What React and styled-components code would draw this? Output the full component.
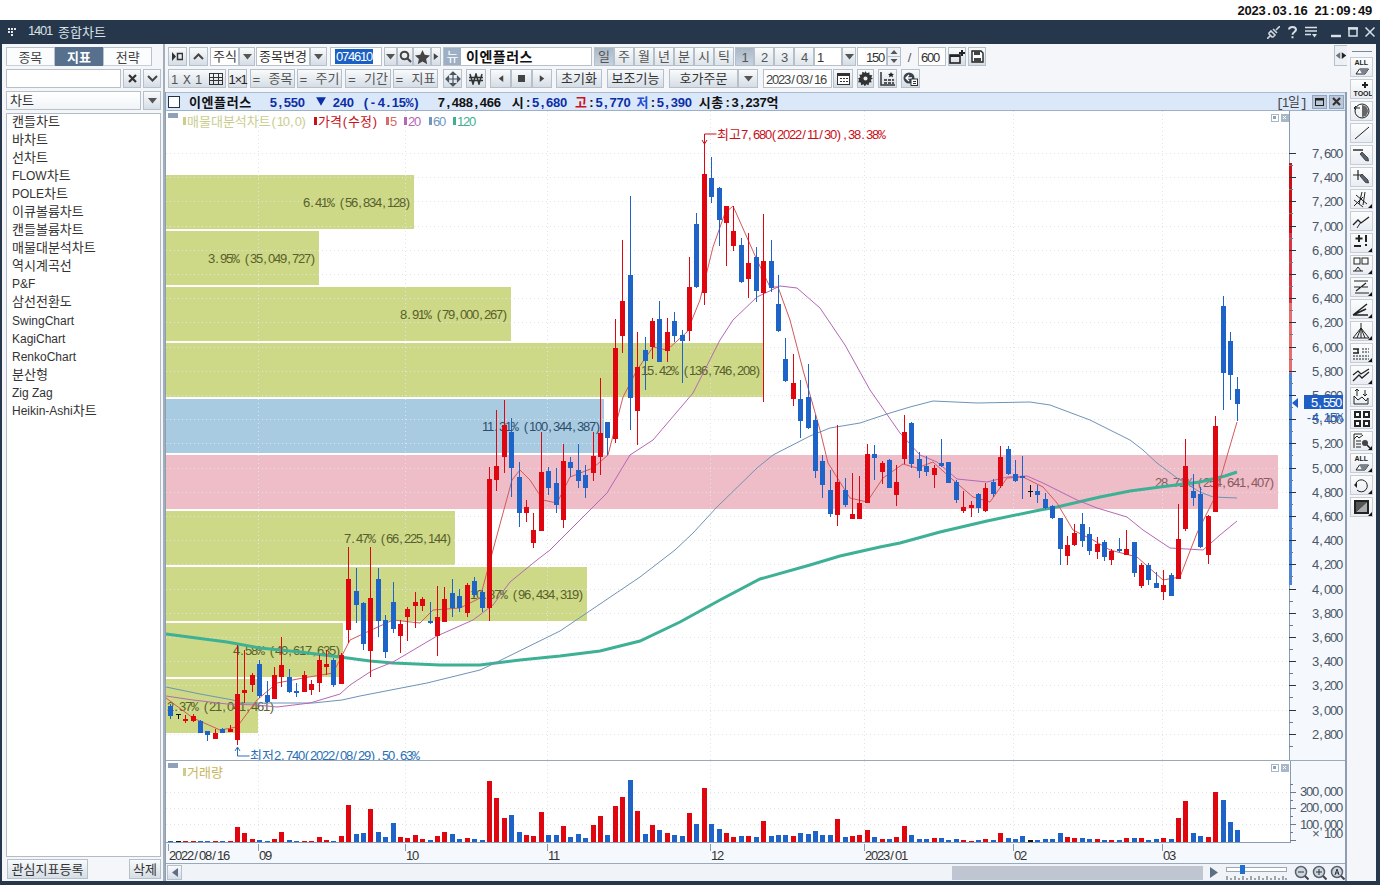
import React from 'react';
import styled, { createGlobalStyle, css } from 'styled-components';

const Global = createGlobalStyle`
  html, body { margin: 0; padding: 0; width: 1380px; height: 885px; overflow: hidden; background: #fff; }
  * { box-sizing: border-box; }
`;

/* ---------- text runs: the original bitmap font puts Latin in fixed half-width cells, Hangul in full-width ones ---------- */
const koCss = css`font-family: "Noto Sans CJK KR", sans-serif; font-size: 13px;`;
const cellCss = css`
  font-family: ${p => p.$mono ? '"Liberation Mono", monospace' : '"Liberation Sans", sans-serif'};
  font-size: 13px; letter-spacing: ${p => p.$ls}px; white-space: pre;
`;
const sansCss = css`font-family: "Liberation Sans", sans-serif; font-size: 12px;`;
const KoSpan = styled.span`${koCss}; position: relative; top: -1px;`;
const SansSpan = styled.span`${sansCss}; position: relative; top: -1px;`;
const CellSpan = styled.span`${cellCss}; margin-left: ${p => p.$dx || 0}px;`;
const CellGroup = styled.span`white-space: pre;`;
const KoT = styled.tspan`${koCss}`;
const CellT = styled.tspan`${cellCss}`;

const classes = [[/^[0-9]+$/, 7.23, false], [/^[,./: ]+$/, 3.61, true], [/^[()-]+$/, 4.33, true]];
const cellRuns = (text, cell) => (text.match(/[0-9]+|[,./: ]+|[()-]+|[^0-9,./: ()-]+/g) || []).map(r => {
  const hit = classes.find(([re]) => re.test(r));
  if (!hit) return { r, mono: true, ls: +(cell - 7.8).toFixed(2), dx: 0 };
  const extra = +(cell - hit[1]).toFixed(2);
  /* narrow punctuation sits in the middle of its cell */
  if (hit[2] && r.length === 1) return { r, mono: false, ls: extra / 2, dx: extra / 2 };
  return { r, mono: false, ls: extra, dx: 0 };
});
const Cells = ({ children, cell = 6 }) => (
  <CellGroup>
    {cellRuns(children, cell).map(({ r, mono, ls, dx }, i) => <CellSpan key={i} $mono={mono} $ls={ls} $dx={dx}>{r}</CellSpan>)}
  </CellGroup>
);
const CellsT = ({ children, cell = 6 }) => cellRuns(children, cell).map(({ r, mono, ls, dx }, i) =>
  <CellT key={i} $mono={mono} $ls={ls} dx={dx}>{r}</CellT>);

const hangulRuns = (s) => s.split(/([가-힣]+)/).filter(Boolean);
const isKo = (r) => /[가-힣]/.test(r);
const MixSans = ({ children }) => hangulRuns(children).map((r, i) =>
  isKo(r) ? <KoSpan key={i}>{r}</KoSpan> : <SansSpan key={i}>{r}</SansSpan>);
const MixT = ({ children }) => hangulRuns(children).map((r, i) =>
  isKo(r) ? <KoT key={i}>{r}</KoT> : <CellsT key={i}>{r}</CellsT>);

/* ---------- page frame ---------- */
const Page = styled.div`width: 1380px; height: 885px; display: flex; flex-direction: column; background: #fff;`;
const Clock = styled.div`
  height: 20px; display: flex; align-items: center; justify-content: flex-end; padding-right: 8px;
  font-weight: 700; color: #111;
`;
const Window = styled.div`flex: 1; display: flex; flex-direction: column; background: #27374b; min-height: 0;`;
const TitleBar = styled.div`height: 24px; display: flex; align-items: center; padding: 0 5px 0 8px; color: #d8e0e8;`;
const TitleText = styled.div`margin-left: 9px; font-size: 12px; white-space: nowrap; display: flex; gap: 6px;`;
const TitleTools = styled.div`margin-left: auto; display: flex; align-items: center;`;
const Body = styled.div`flex: 1; min-height: 0; display: flex; margin: 0 4px 4px 2px; background: #f4f6f9;`;

/* ---------- left sidebar ---------- */
const Sidebar = styled.div`width: 161px; display: flex; flex-direction: column; padding: 3px 2px 2px 4px;`;
const Splitter = styled.div`width: 2px; background: #a3aebb;`;
const Tabs = styled.div`display: flex; height: 19px; margin-right: 9px;`;
const Tab = styled.div`
  flex: 1; display: flex; align-items: center; justify-content: center; padding-top: 2px;
  background: ${p => p.$on ? '#56708e' : '#fbfcfd'};
  color: ${p => p.$on ? '#fff' : '#444'};
  font-weight: ${p => p.$on ? 700 : 400};
  border: 1px solid ${p => p.$on ? '#56708e' : '#b9c1ca'};
  border-bottom-color: ${p => p.$on ? '#56708e' : '#c9d0d7'};
`;
const SideRow = styled.div`display: flex; height: 19px; margin-top: 3px; gap: ${p => p.$gap || 2}px;`;
const Field = styled.div`
  flex: 1; min-width: 0; background: ${p => p.$grad ? 'linear-gradient(#fff,#f1f4f7)' : '#fff'};
  border: 1px solid #b8c0c9; display: flex; align-items: center; padding-left: 3px; color: #333;
`;
const Btn = styled.div`
  flex: none; width: ${p => p.$w}px; height: ${p => p.$h || 19}px; margin-left: ${p => p.$ml || 0}px;
  display: flex; align-items: center; justify-content: center; gap: ${p => p.$gap || 0}px;
  background: linear-gradient(#f9fbfc, #d5dde5); border: 1px solid #b6c0ca;
  color: ${p => p.$c || '#555'}; white-space: nowrap;
`;
const ActiveSeg = styled(Btn)`background: ${p => p.$on ? 'linear-gradient(#aab7c6,#c8d3de)' : 'linear-gradient(#f9fbfc,#dde4ea)'};`;
const DashLabel = styled.span`white-space: pre;`;
const List = styled.div`flex: 1; margin-top: 3px; background: #fff; border: 1px solid #b3bcc6; padding: 0 0 0 5px;`;
const ListItem = styled.div`height: 18.05px; line-height: 16px; color: #333; white-space: nowrap;`;
const SideFoot = styled.div`display: flex; justify-content: space-between; height: 20px; margin-top: 2px; padding-left: 1px;`;

/* ---------- main column ---------- */
const Main = styled.div`flex: 1; min-width: 0; display: flex; flex-direction: column;`;
const ToolRow = styled.div`display: flex; height: 19px; margin-top: 3px; padding-left: 3px; position: relative;`;
const Box = styled.div`
  flex: none; width: ${p => p.$w}px; height: 19px; margin-left: ${p => p.$ml || 0}px;
  background: #fff; border: 1px solid #b8c0c9; display: flex; align-items: center;
  justify-content: ${p => p.$end ? 'flex-end' : 'flex-start'}; padding: 0 2px; color: ${p => p.$c || '#333'}; white-space: nowrap;
`;
const Selected = styled.span`background: #1a60c4; color: #fff; padding: 0 1px; margin-left: 2px; line-height: 14px;`;
const News = styled.div`
  width: 17px; height: 17px; background: #9cafc4; color: #fff; display: flex; align-items: center; justify-content: center; margin-left: -2px;
`;
const StockName = styled.span`
  ${koCss}; font-size: 14px; font-weight: 700; color: #111; margin-left: 5px; letter-spacing: .5px; position: relative; top: -1px;
`;
const Slash = styled.div`flex: none; width: 17px; text-align: center; color: #555; line-height: 19px;`;
const Collapse = styled.div`
  position: absolute; right: 0; top: -2px; width: 13px; height: 21px; background: #edf1f5;
  border: 1px solid #b6c0ca; border-right: 0; display: flex; align-items: center; justify-content: center;
`;
const ChartWrap = styled.div`
  flex: 1; margin-top: 4px; min-height: 0; display: flex; flex-direction: column;
  border-left: 1px solid #8d9db2; border-right: 2px solid #8d9db2;
`;
const Header = styled.div`
  flex: none; height: 19px; background: #dbe8fa; border-top: 1px solid #a9bbd1; border-bottom: 1px solid #9db0c8;
  display: flex; align-items: center; padding-left: 2px; position: relative; white-space: nowrap;
  font-weight: 700; color: #111;
`;
const Check = styled.div`width: 12px; height: 12px; border: 1px solid #24324a; background: #fff;`;
const HeadName = styled.span`${koCss}; font-weight: 700; letter-spacing: .6px; margin-left: ${p => p.$ml}px; color: ${p => p.$c || '#111'};`;
const HeadNum = styled.span`margin-left: ${p => p.$ml || 0}px; color: ${p => p.$c || '#111'};`;
const Period = styled.div`
  margin-left: auto; display: flex; align-items: center; gap: 2px; padding-right: 1px; font-weight: 400; color: #444;
`;
const PeriodText = styled.span`margin-right: 4px;`;
const PanelBtn = styled.div`
  width: 15px; height: 14px; background: #b9c7d8; border: 1px solid #93a4b8; display: flex; align-items: center; justify-content: center; color: #222;
`;
const PriceSvg = styled.svg`display: block; flex: none; width: 1179px; height: 649px; background: #fff; overflow: visible;`;
const VolSvg = styled.svg`display: block; flex: none; width: 1179px; height: 102px; background: #fff; border-top: 0;`;
const PanelLine = styled.div`flex: none; height: 1px; background: #9aa9bc; position: relative;`;
const ScrollBar = styled.div`flex: none; height: 17px; display: flex; align-items: center; background: #f0f3f7;`;
const Thumb = styled.div`width: 251px; height: 14px; margin-left: auto; background: #bfc6d2;`;

/* ---------- right drawing toolbar ---------- */
const RightBar = styled.div`width: 29px; flex: none; display: flex; flex-direction: column; align-items: flex-start; padding: 7px 0 0 3px; gap: 2px;`;
const RightRule = styled.div`width: 20px; height: 1px; background: #7f8a96; margin: 0 0 3px 2px;`;
const ToolCell = styled.div`
  position: relative; width: 23px; height: 20px; background: linear-gradient(#fcfdfd,#e9edf2); border: 1px solid #c7cdd4;
  ${p => p.$corner && css`&::after { content: ''; position: absolute; right: 0; bottom: 0; border: 2px solid transparent; border-right-color: #111; border-bottom-color: #111; }`}
`;
const ToolSvg = styled.svg`display: block; width: 21px; height: 18px;`;
const TinyLabel = styled.text`font: bold 7px "Liberation Sans", sans-serif; fill: #222;`;
const Ico = styled.svg`display: block; flex: none; margin-left: ${p => p.$ml || 0}px;`;

/* ---------- chart text ---------- */
const Lab = styled.text`fill: ${p => p.$c || '#4b5666'}; text-anchor: ${p => p.$a || 'start'};`;

/* candles: bodyTop, bodyBottom, wickTop, wickBottom, colour (r/b/k), volume height */
const C = [
[706,716,704,719,'b',1],[714,715,714,719,'k',1],[719,721,715,723,'r',1],[716,721,714,722,'r',1],[721,733,720,733,'b',1],[731,735,731,741,'b',1],[733,739,729,739,'r',1],[729,733,728,733,'b',1],[729,732,725,732,'r',1],[694,740,645,745,'r',15],
[690,693,650,703,'r',9],[675,685,673,692,'r',3],[664,696,660,698,'b',2],[695,702,681,703,'b',1],[675,699,667,699,'r',3],[665,677,637,687,'r',10],[677,692,669,693,'b',2],[691,693,683,697,'b',1],[675,692,671,692,'r',1],[684,690,680,695,'r',1],
[660,683,655,692,'r',5],[664,667,650,675,'r',2],[660,685,658,687,'b',1],[655,684,653,684,'r',6],[579,630,547,643,'r',37],[591,605,568,623,'b',8],[603,644,602,650,'b',9],[598,651,547,677,'r',33],[579,621,568,637,'b',10],[620,652,615,658,'b',5],
[602,629,582,633,'b',19],[624,636,620,653,'r',5],[609,617,607,641,'r',4],[602,606,592,628,'r',7],[599,606,597,611,'r',3],[621,623,602,624,'b',2],[617,636,586,656,'r',6],[599,622,587,622,'r',10],[593,608,579,617,'b',8],[596,608,589,612,'b',3],
[585,613,583,617,'r',4],[581,595,577,597,'b',3],[592,608,590,612,'b',2],[479,608,467,621,'r',61],[466,480,410,491,'r',44],[425,457,400,473,'r',24],[432,468,418,497,'b',27],[477,513,462,527,'b',10],[507,513,500,522,'r',7],[530,543,513,548,'r',6],
[472,531,432,531,'r',30],[471,488,467,495,'b',7],[483,505,468,513,'b',7],[461,520,444,528,'r',16],[462,468,457,477,'b',5],[470,481,444,488,'b',8],[475,488,465,498,'b',4],[456,473,432,481,'r',17],[433,457,378,475,'r',26],[422,438,422,455,'b',7],
[348,439,319,443,'r',36],[301,336,240,353,'r',45],[275,398,196,430,'b',62],[367,411,332,445,'r',31],[350,361,337,390,'b',8],[321,347,318,359,'r',17],[319,362,301,362,'b',12],[332,351,318,362,'r',9],[321,336,312,342,'b',7],[335,341,330,383,'b',6],
[287,331,257,341,'r',29],[224,287,213,288,'b',18],[174,293,144,305,'r',54],[178,197,157,203,'b',18],[188,220,187,246,'b',13],[206,223,206,266,'r',9],[231,246,206,251,'r',5],[245,282,238,283,'b',6],[263,279,233,298,'r',6],[257,291,247,302,'b',5],
[261,293,214,402,'r',21],[261,288,240,292,'b',6],[304,331,275,332,'b',7],[359,381,338,382,'b',7],[383,399,354,406,'r',6],[399,421,380,438,'b',9],[397,428,364,429,'b',8],[420,471,415,478,'b',11],[461,485,455,498,'b',7],[490,514,470,517,'b',7],
[482,515,425,526,'r',23],[490,505,478,507,'b',5],[514,519,473,519,'r',6],[503,519,476,519,'r',7],[454,503,444,503,'r',12],[454,458,445,480,'b',5],[463,472,461,484,'r',3],[460,488,459,488,'b',3],[482,495,465,506,'r',5],[432,459,415,464,'r',16],
[423,464,422,468,'b',7],[459,471,452,478,'b',3],[466,472,456,476,'b',3],[468,475,465,488,'r',4],[463,466,439,467,'b',4],[462,483,462,483,'b',2],[482,500,480,503,'b',3],[507,511,491,513,'r',2],[505,508,501,517,'r',1],[494,508,493,513,'b',2],
[488,511,483,512,'r',3],[482,494,479,497,'b',2],[457,486,446,488,'r',9],[449,474,446,475,'b',4],[474,481,460,482,'b',3],[476,478,456,499,'b',6],[491,492,485,497,'k',2],[491,495,485,503,'b',2],[499,508,493,509,'b',3],[506,518,505,519,'b',3],
[518,549,518,565,'b',9],[545,556,536,565,'r',5],[533,545,524,546,'r',4],[524,541,513,547,'b',4],[534,551,527,555,'b',3],[544,552,537,559,'r',3],[542,557,540,561,'b',2],[551,560,549,565,'r',2],[549,551,538,552,'b',2],[549,555,530,555,'r',4],
[542,573,542,577,'b',4],[565,586,563,588,'r',4],[565,580,563,585,'b',2],[583,588,572,588,'b',3],[585,592,570,600,'r',4],[575,596,573,596,'b',3],[539,579,504,579,'r',24],[466,529,439,531,'r',41],[491,498,474,506,'b',9],[494,547,487,548,'b',6],
[516,555,515,564,'r',5],[426,512,416,512,'r',50],[306,373,296,410,'b',42],[341,375,332,400,'b',20],[389,404,377,421,'b',12],
];
const colour = { r: '#e0060f', b: '#1e63c8', k: '#111' };
const cx = (i) => Math.round(170.3 + i * 7.41);

const pts = (a) => a.map(p => p.join(',')).join(' ');
const MA120 = [[166,634],[227,642],[260,648],[300,652],[340,657],[370,661],[393,663],[440,665],[480,665],[520,660],[560,656],[600,651],[640,641],[680,622],[720,600],[760,579],[810,565],[840,556],[880,547],[900,543],[940,532],[987,521],[1040,510],[1057,507],[1100,497],[1130,491],[1160,487],[1200,482],[1225,476],[1237,472]];
const MA60 = [[166,687],[200,694],[233,700],[240,703],[260,703],[313,703],[342,700],[360,696],[427,683],[480,670],[493,664],[560,631],[640,577],[675,550],[693,533],[717,507],[757,468],[773,455],[810,436],[830,428],[860,423],[890,413],[910,407],[933,401],[977,403],[1030,402],[1050,405],[1090,420],[1130,440],[1143,450],[1157,463],[1177,478],[1200,492],[1213,497],[1237,498]];
const MA20 = [[166,696],[193,700],[227,704],[257,705],[277,707],[310,703],[340,694],[350,685],[373,670],[393,662],[437,636],[473,620],[493,605],[510,582],[537,560],[550,550],[607,493],[630,455],[653,440],[693,393],[720,340],[733,320],[757,297],[780,286],[797,288],[820,308],[845,345],[870,390],[900,433],[920,455],[937,462],[957,479],[987,482],[1007,477],[1027,476],[1043,483],[1077,500],[1097,508],[1127,517],[1143,530],[1170,548],[1203,550],[1220,535],[1237,521]];
const MA5 = [[166,698],[193,718],[220,730],[237,727],[257,700],[277,683],[303,678],[333,673],[350,640],[367,632],[393,620],[420,623],[433,610],[460,608],[480,598],[493,550],[512,480],[520,470],[530,480],[543,500],[557,503],[570,477],[593,468],[608,455],[623,397],[637,370],[653,347],[667,350],[687,332],[700,300],[713,247],[725,213],[733,206],[757,260],[770,287],[778,287],[790,320],[803,370],[820,430],[828,463],[850,498],[867,502],[883,478],[903,464],[917,468],[933,462],[953,480],[973,497],[990,502],[1007,478],[1023,477],[1043,487],[1057,503],[1073,530],[1093,540],[1110,550],[1137,557],[1163,580],[1180,577],[1197,533],[1215,497],[1237,422]];

/* y, box right edge, fill, text colour, label, label right edge */
const Profile = [
 [175,414,'#cdd986','#59602c','6.41% (56,834,128)',411],[231,319,'#cdd986','#59602c','3.95% (35,049,727)',316],[287,511,'#cdd986','#59602c','8.91% (79,000,267)',508],
 [343,764,'#cdd986','#59602c','15.42% (136,746,208)',761],[399,604,'#a9cbe2','#2d4f6d','11.31% (100,344,387)',601],[455,1278,'#eebdc7','#8a5a62','28.71% (254,641,407)',1275],
 [511,455,'#cdd986','#59602c','7.47% (66,225,144)',452],[567,587,'#cdd986','#59602c','10.87% (96,434,319)',584],[623,343,'#cdd986','#59602c','4.58% (40,617,635)',341],[679,258,'#cdd986','#59602c','2.37% (21,041,461)',275],
];
const Months = [258, 405, 547, 710, 864, 1013, 1162];
const Prices = [7600,7400,7200,7000,6800,6600,6400,6200,6000,5800,5600,5400,5200,5000,4800,4600,4400,4200,4000,3800,3600,3400,3200,3000,2800];
const py = (i) => 153 + i * 24.2;
const fmt = (n) => n.toLocaleString('en-US');
const Legend = [
 [183,'#c9cd8e','매물대분석차트(10,0)'],[314,'#c8101a','가격(수정)'],[386,'#d86a6a','5'],[404,'#b566b8','20'],[429,'#6f97bd','60'],[453,'#3eaf91','120'],
];

const MiniBoxes = ({ y }) => (
  <g shapeRendering="crispEdges">
    <rect x="1271" y={y} width="7" height="7" fill="#fff" stroke="#a9b8c8" />
    <rect x="1273" y={y + 2} width="3" height="3" fill="#8fa1b5" />
    <rect x="1281" y={y} width="7" height="7" fill="#a9b8c8" stroke="#a9b8c8" />
    <path d={`M1283 ${y + 2}l3 3m0-3l-3 3`} stroke="#fff" fill="none" />
    <rect x="168" y={y - 1} width="10" height="5" fill="#8ea0ba" />
  </g>
);

const PriceChart = () => (
  <PriceSvg viewBox="166 111 1179 649">
    <rect x="1290" y="111" width="55" height="649" fill="#f5f8fc" />
    <g shapeRendering="crispEdges">
      {Profile.map(([y, x2, f]) => <rect key={y} x="166" y={y} width={x2 - 166} height="54" fill={f} />)}
      {Prices.map((_, i) => <line key={i} x1="166" x2="1289" y1={Math.round(py(i))} y2={Math.round(py(i))} stroke="#dfe4ea" strokeDasharray="1 3" />)}
      {Months.map(x => <line key={x} x1={x} x2={x} y1="111" y2="760" stroke="#dfe4ea" strokeDasharray="1 3" />)}
    </g>
    {Profile.map(([y, , , c, t, tx]) => <Lab key={y} x={tx} y={y + 32} $c={c} $a="end"><MixT>{t}</MixT></Lab>)}
    <polyline points={pts(MA120)} fill="none" stroke="#3eb096" strokeWidth="3" />
    <polyline points={pts(MA60)} fill="none" stroke="#6f93b8" strokeWidth="1" />
    <polyline points={pts(MA20)} fill="none" stroke="#b468b4" strokeWidth="1" />
    <polyline points={pts(MA5)} fill="none" stroke="#d2595c" strokeWidth="1" />
    <g shapeRendering="crispEdges">
      {C.map((d, i) => (
        <g key={i} fill={colour[d[4]]}>
          <rect x={cx(i)} y={d[2]} width="1" height={d[3] - d[2]} />
          <rect x={cx(i) - 2} y={d[0]} width="5" height={Math.max(1, d[1] - d[0])} />
        </g>
      ))}
      <rect x="1289" y="163" width="3" height="70" fill="#cb0f12" />
      <rect x="1289" y="233" width="3" height="70" fill="#dc3140" />
      <rect x="1289" y="303" width="3" height="70" fill="#ea6b6c" />
      <rect x="1289" y="373" width="3" height="212" fill="#4a84d8" />
      <line x1="1289.5" x2="1289.5" y1="111" y2="163" stroke="#8b9bb0" />
      <line x1="1289.5" x2="1289.5" y1="585" y2="760" stroke="#8b9bb0" />
      {Prices.map((_, i) => <line key={i} x1="1289" x2="1296" y1={Math.round(py(i))} y2={Math.round(py(i))} stroke="#2a3340" />)}
      {Prices.map((_, i) => <line key={i} x1="1289" x2="1293" y1={Math.round(py(i) + 12)} y2={Math.round(py(i) + 12)} stroke="#6e7b8b" />)}
    </g>
    {Prices.map((p, i) => <Lab key={p} x="1342" y={py(i) + 5} $a="end"><CellsT>{fmt(p)}</CellsT></Lab>)}
    <path d="M1292 403l6-5v10z" fill="#1f5fc4" />
    <rect x="1304" y="395" width="39" height="14" fill="#1f5fc4" />
    <Lab x="1341" y="407" $c="#fff" $a="end"><CellsT>5,550</CellsT></Lab>
    <Lab x="1341" y="422" $c="#1f5fc4" $a="end"><CellsT>-4.15%</CellsT></Lab>

    {Legend.map(([x, c, t]) => (
      <g key={x}>
        <rect x={x} y="117" width="3" height="8" fill={c} shapeRendering="crispEdges" />
        <Lab x={x + 4} y="126" $c={c}><MixT>{t}</MixT></Lab>
      </g>
    ))}
    <MiniBoxes y={114} />
    <path d="M704.5 145v-11h12M702 140l2.5 4l2.500-4" fill="none" stroke="#c8101a" />
    <Lab x="717" y="139" $c="#c8101a"><MixT>최고7,680(2022/11/30),38.38%</MixT></Lab>
    <path d="M237.500 748v8h12M235 751l2.500-4l2.500 4" fill="none" stroke="#2a6fb5" />
    <Lab x="250" y="760" $c="#2a6fb5"><MixT>최저2,740(2022/08/29),50.63%</MixT></Lab>
  </PriceSvg>
);

const Dates = [[169,'2022/08/16',168],[259,'09',258],[406,'10',405],[548,'11',547],[711,'12',710],[865,'2023/01',864],[1014,'02',1013],[1163,'03',1162]];
const VolChart = () => (
  <VolSvg viewBox="166 761 1179 102">
    <rect x="1290" y="761" width="55" height="82" fill="#f5f8fc" />
    <rect x="166" y="843" width="1179" height="20" fill="#f5f8fc" />
    <g shapeRendering="crispEdges">
      {[792, 808, 824].map(y => <line key={y} x1="166" x2="1289" y1={y} y2={y} stroke="#dfe4ea" strokeDasharray="1 3" />)}
      {Months.map(x => <line key={x} x1={x} x2={x} y1="761" y2="842" stroke="#dfe4ea" strokeDasharray="1 3" />)}
      {C.map((d, i) => <rect key={i} x={cx(i) - 2} y={842 - d[5]} width="5" height={d[5]} fill={colour[d[4]]} />)}
      <line x1="166" x2="1290" y1="842.5" y2="842.5" stroke="#8b9bb0" />
      <line x1="1290" x2="1290" y1="761" y2="843" stroke="#8b9bb0" />
      {[784,792,800,808,816,824,832,840].map((y, i) => <line key={y} x1="1290" x2={i % 2 ? 1296 : 1293} y1={y} y2={y} stroke="#6e7b8b" />)}
      {Dates.map(([, , t]) => <line key={t} x1={t} x2={t} y1="844" y2="851" stroke="#8b9bb0" />)}
    </g>
    <Lab x="1342" y="796" $a="end"><CellsT>300,000</CellsT></Lab>
    <Lab x="1342" y="812" $a="end"><CellsT>200,000</CellsT></Lab>
    <Lab x="1342" y="829" $a="end"><CellsT>100,000</CellsT></Lab>
    <Lab x="1342" y="838" $a="end"><CellsT>× 100</CellsT></Lab>
    <rect x="183" y="768" width="3" height="8" fill="#c9cd8e" shapeRendering="crispEdges" />
    <Lab x="187" y="777" $c="#c9b45a"><MixT>거래량</MixT></Lab>
    <MiniBoxes y={764} />
    {Dates.map(([x, t]) => <Lab key={t} x={x} y="860" $c="#333"><CellsT>{t}</CellsT></Lab>)}
  </VolSvg>
);

/* ---------- small icons ---------- */
const Caret = ({ c = '#555' }) => <Ico width="9" height="6" viewBox="0 0 9 6"><path d="M0 0h9L4.500 5.500z" fill={c} /></Ico>;
const Search = () => <Ico width="13" height="13" viewBox="0 0 13 13"><circle cx="5.500" cy="5.500" r="3.800" fill="none" stroke="#444" strokeWidth="2" /><path d="M8 8l4 4" stroke="#444" strokeWidth="2.200" /></Ico>;
const Star = () => <Ico width="15" height="14" viewBox="0 0 15 14"><path d="M7.500 0l2.200 4.800 5.300.6-3.900 3.600 1.100 5.200-4.700-2.700-4.700 2.700 1.100-5.200L0 5.400l5.300-.6z" fill="#444" /></Ico>;
const Tri = ({ dir = 'r', c = '#444', s = 8 }) => (
  <Ico width={s} height={s + 1} viewBox="0 0 8 9">
    <path d={dir === 'r' ? 'M1 0l6 4.500L1 9z' : dir === 'l' ? 'M7 0L1 4.500 7 9z' : dir === 'u' ? 'M0 7l4-6 4 6z' : 'M0 1h8L4 8z'} fill={c} />
  </Ico>
);
const Grid3 = () => <Ico width="14" height="12" viewBox="0 0 14 12"><path d="M.5.5h13v11H.5zM.5 4.200h13M.5 7.800h13M4.800.500v11M9.200.500v11" fill="none" stroke="#333" shapeRendering="crispEdges" /></Ico>;
const Move = () => <Ico width="16" height="16" viewBox="0 0 16 16"><path d="M8 1v14M1 8h14M8 1L5.500 3.500h5zM8 15l-2.500-2.500h5zM1 8l2.500-2.500v5zM15 8l-2.500-2.500v5z" fill="#4a5560" stroke="#4a5560" strokeWidth="1.200" /></Ico>;
const Won = () => <Ico width="14" height="12" viewBox="0 0 14 12"><path d="M1 1l3 10 3-10 3 10 3-10M0 4.500h14M0 7.500h14" fill="none" stroke="#333" strokeWidth="1.500" /></Ico>;
const Calendar = () => <Ico width="13" height="13" viewBox="0 0 13 13"><rect x=".5" y="1.500" width="12" height="11" fill="#fff" stroke="#333" /><rect x="0" y="1" width="13" height="3" fill="#333" /><path d="M3 6.500h2M6 6.500h2M9 6.500h2M3 9.500h2M6 9.500h2M9 9.500h2" stroke="#333" /></Ico>;
const Gear = () => <Ico width="15" height="15" viewBox="0 0 15 15"><path d="M7.500 0l1.300 2.300 2.500-1 .3 2.700 2.700.3-1 2.500L15 7.500l-2.300 1.300 1 2.500-2.700.3-.3 2.700-2.500-1-1.300 2.300-1.300-2.300-2.500 1-.3-2.700-2.700-.3 1-2.500L0 7.500l2.300-1.300-1-2.500 2.700-.3.300-2.700 2.500 1z" fill="#333" /><circle cx="7.500" cy="7.500" r="2" fill="#e6ebf0" /></Ico>;
const DotGrid = () => <Ico width="16" height="15" viewBox="0 0 16 15"><path d="M1 1v13h14" fill="none" stroke="#333" strokeWidth="1.500" /><path d="M4 8h3v2H4zM8 8h3v2H8zM12 8h2v2h-2zM4 11h3v2H4zM8 11h3v2H8zM12 11h2v2h-2z" fill="#555" /><path d="M11 1l.9 1.800L14 3l-1.400 1.300.3 2-1.900-1-1.900 1 .3-2L8 3l2.100-.2z" fill="#222" /></Ico>;
const Export = () => <Ico width="15" height="14" viewBox="0 0 15 14"><circle cx="6" cy="6" r="5.500" fill="#3a4350" /><path d="M3 6h6M6 3L3 6l3 3" fill="none" stroke="#fff" strokeWidth="1.300" /><rect x="8" y="7" width="6.500" height="6.500" fill="#fff" stroke="#333" /><path d="M10 9.500h3M10 11.500h3" stroke="#333" /></Ico>;
const NewWin = () => <Ico width="16" height="14" viewBox="0 0 16 14"><rect x="1" y="5" width="10" height="8" fill="none" stroke="#222" strokeWidth="1.600" /><path d="M1 6h10" stroke="#222" strokeWidth="2" /><path d="M13 0v6M10 3h6" stroke="#222" strokeWidth="2" /></Ico>;
const Save = () => <Ico width="13" height="13" viewBox="0 0 13 13"><path d="M1 1h9l2 2v9H1z" fill="#fff" stroke="#222" strokeWidth="1.400" /><rect x="3" y="1" width="6" height="4" fill="#444" /><rect x="3" y="8" width="7" height="4" fill="#444" /></Ico>;
const Spin = () => (
  <Ico width="14" height="19" viewBox="0 0 14 19">
    <rect x=".5" y=".5" width="13" height="18" fill="#eef1f5" stroke="#b6c0ca" /><path d="M0 9.500h14" stroke="#b6c0ca" />
    <path d="M3.500 7l3.500-4 3.500 4zM3.500 12l3.500 4 3.500-4z" fill="#555" />
  </Ico>
);
const XMark = () => <Ico width="9" height="9" viewBox="0 0 9 9"><path d="M1 1l7 7M8 1L1 8" stroke="#333" strokeWidth="2.200" /></Ico>;
const ChevD = () => <Ico width="11" height="7" viewBox="0 0 11 7"><path d="M1 1l4.500 4.500L10 1" fill="none" stroke="#444" strokeWidth="2" /></Ico>;
const ChevU = () => <Ico width="11" height="7" viewBox="0 0 11 7"><path d="M1 6l4.500-4.500L10 6" fill="none" stroke="#444" strokeWidth="2" /></Ico>;
const Dash = ({ children }) => <DashLabel><Cells>{'= '}</Cells> <KoSpan>{children}</KoSpan></DashLabel>;

const TitleIcons = () => (
  <TitleTools>
    <Ico width="13" height="13" viewBox="0 0 13 13"><path d="M13 0L9 4M0 13l3-3M4 5l4 4-2 2-1 0-3-3 0-1zM6 3l4 4" fill="none" stroke="#cfd8e2" strokeWidth="1.600" /></Ico>
    <Ico $ml={8} width="9" height="13" viewBox="0 0 9 13"><path d="M1 3.500C1 1.500 2.800 1 4.500 1S8 2 8 3.800c0 2-3.500 2.500-3.500 5M4.500 10.200v2" fill="none" stroke="#d8e0e8" strokeWidth="2" /></Ico>
    <Ico $ml={8} width="12" height="12" viewBox="0 0 12 12"><path d="M0 1.500h12M0 5h12M0 8.500h6" stroke="#d8e0e8" strokeWidth="1.500" /><path d="M7 8h5l-2.500 3.500z" fill="#d8e0e8" /></Ico>
    <Ico $ml={14} width="10" height="12" viewBox="0 0 10 12"><path d="M0 10h10" stroke="#d8e0e8" strokeWidth="2.400" /></Ico>
    <Ico $ml={7} width="10" height="10" viewBox="0 0 10 10"><rect x="1" y="1" width="8" height="8" fill="none" stroke="#d8e0e8" strokeWidth="1.500" /><path d="M0 1.500h10" stroke="#d8e0e8" strokeWidth="2.400" /></Ico>
    <Ico $ml={7} width="10" height="10" viewBox="0 0 10 10"><path d="M.5.5l9 9M9.500.5l-9 9" stroke="#d8e0e8" strokeWidth="1.500" /></Ico>
  </TitleTools>
);

const eraser = <><path d="M5 16l3.500-5h9L14 16z" fill="#fff" stroke="#222" /><path d="M8.500 11h9L14 16h-3z" fill="#7a838d" /></>;
const pencil = <path d="M9 8l2-2 6 6 .5 3-3-.5z" fill="#5b6570" stroke="#222" strokeWidth=".7" />;
const s = { fill: 'none', stroke: '#222', strokeWidth: 1 };
const DrawIcons = [
  [0, <>{<TinyLabel x="3.500" y="7">ALL</TinyLabel>}{eraser}</>],
  [0, <><path d="M14 2v6M11 5h6" stroke="#222" strokeWidth="2" /><TinyLabel x="2.500" y="15.500">TOOL</TinyLabel></>],
  [0, <><circle cx="11" cy="9" r="7" {...s} /><path d="M11 3a6 6 0 0 1 0 12z" fill="#666" /><path d="M3 6h6M5 4l-2 2 2 2" {...s} /></>],
  [0, <path d="M4 15L18 3" {...s} />],
  [0, <><path d="M2 4h10" stroke="#222" strokeWidth="1.400" />{pencil}</>],
  [0, <><path d="M7 2v10M2 7h10" stroke="#222" strokeWidth="1.200" />{pencil}</>],
  [1, <path d="M3 16L12 7M3 10l9 7M8 14l3-12M5 5l11 9M14 2l-2 13" {...s} />],
  [0, <><path d="M2 13l5-5 3 3 8-6" stroke="#222" strokeWidth="1.300" fill="none" /><path d="M6 16l4-6" {...s} /></>],
  [1, <><path d="M8 1v7M4.500 4.500h7M3 12h7" stroke="#222" strokeWidth="2" /><path d="M15 1v7M15 10v2" stroke="#222" strokeWidth="2" /></>],
  [1, <><rect x="3" y="2" width="6" height="6" {...s} /><rect x="11" y="2" width="6" height="6" {...s} /><path d="M2 15h10M4 15l3-4 3 4" {...s} /></>],
  [1, <path d="M3 3h14M15 5L5 13M4 15h14M3 9h6M11 9h6" stroke="#222" strokeWidth="1.200" fill="none" />],
  [1, <path d="M2 15h15M2 15L16 4M2 15l13-6" stroke="#222" strokeWidth="1.500" fill="none" />],
  [1, <path d="M10 1v15M10 6L2 16M10 6l8 10M10 6L6 16M10 6l4 10M2 16h16" {...s} />],
  [1, <><path d="M2 5h6M2 9h6M7 5v4" stroke="#222" strokeWidth="1.500" /><path d="M11 5h7M11 8h7M2 12h16M2 15h16" stroke="#222" strokeDasharray="2 1" /></>],
  [1, <><path d="M2 9l5-4 3 3 8-5M2 15l6-6 3 3 7-6" stroke="#222" strokeWidth="1.300" fill="none" /></>],
  [0, <><path d="M3 16V8l4 4 4-3 4 4 2-3v6z" {...s} /><path d="M6 1v7M4 3l2-2 2 2M14 8V2M12 6l2 2 2-2" {...s} /></>],
  [0, <><rect x="3" y="1" width="7" height="7" fill="#222" /><rect x="12" y="1" width="7" height="7" fill="#222" /><rect x="3" y="10" width="7" height="7" fill="#222" /><rect x="12" y="10" width="7" height="7" fill="#222" /><path d="M5 3h3v3H5zM14 3h3v3h-3zM5 12h3v3H5zM14 12h3v3h-3z" fill="#fff" /></>],
  [1, <><path d="M3 16V2h8M3 7l3-3 2 2 4-3M5 9h5M5 12h5M5 15h5" {...s} /><circle cx="14" cy="11" r="3" fill="#444" /><path d="M16 13l3 3" stroke="#222" strokeWidth="1.500" /></>],
  [1, <><TinyLabel x="3.500" y="7">ALL</TinyLabel>{eraser}</>],
  [1, <><path d="M5 7a6 6 0 1 1 1 7" {...s} /><path d="M3 9l3-3v6z" fill="#222" /></>],
  [1, <><rect x="3" y="2" width="15" height="14" fill="#222" /><path d="M5 14L16 4v10z" fill="#aaa" /><path d="M5 14V4h11z" fill="#555" /></>],
];

export default function App() {
  const listNames = ['캔들차트','바차트','선차트','FLOW차트','POLE차트','이큐볼륨차트','캔들볼륨차트','매물대분석차트','역시계곡선','P&F','삼선전환도','SwingChart','KagiChart','RenkoChart','분산형','Zig Zag','Heikin-Ashi차트'];
  return (
    <Page>
      <Global />
      <Clock><Cells cell={7}>2023.03.16 21:09:49</Cells></Clock>
      <Window>
        <TitleBar>
          <Ico width="11" height="9" viewBox="0 0 11 9"><path d="M0 0h2v2H0zM3 0h2v2H3zM6 0h2v2H6zM0 3h2v2H0zM3 3h2v2H3zM3 6h2v2H3z" fill="#e4e9ee" /></Ico>
          <TitleText><Cells>1401</Cells><KoSpan>종합차트</KoSpan></TitleText>
          <TitleIcons />
        </TitleBar>
        <Body>
          <Sidebar>
            <Tabs>
              <Tab><KoSpan>종목</KoSpan></Tab>
              <Tab $on><KoSpan>지표</KoSpan></Tab>
              <Tab><KoSpan>전략</KoSpan></Tab>
            </Tabs>
            <SideRow>
              <Field />
              <Btn $w={18}><XMark /></Btn>
              <Btn $w={18}><ChevD /></Btn>
            </SideRow>
            <SideRow $gap={0}>
              <Field $grad><KoSpan>차트</KoSpan></Field>
              <Btn $w={18}><Caret /></Btn>
            </SideRow>
            <List>
              {listNames.map(n => <ListItem key={n}><MixSans>{n}</MixSans></ListItem>)}
            </List>
            <SideFoot>
              <Btn $w={81} $h={20} $c="#333"><KoSpan>관심지표등록</KoSpan></Btn>
              <Btn $w={32} $h={20} $c="#333"><KoSpan>삭제</KoSpan></Btn>
            </SideFoot>
          </Sidebar>
          <Splitter />
          <Main>
            <ToolRow>
              <Btn $w={19}><Ico width="11" height="9" viewBox="0 0 11 9"><path d="M0 0l4 4.500L0 9z" fill="#333" /><rect x="5.500" y="1.500" width="5" height="6" fill="none" stroke="#333" strokeWidth="1.500" /></Ico></Btn>
              <Btn $w={19} $ml={2}><ChevU /></Btn>
              <Box $w={29} $ml={2}><KoSpan>주식</KoSpan></Box>
              <Btn $w={16}><Caret /></Btn>
              <Box $w={54} $ml={1}><KoSpan>종목변경</KoSpan></Box>
              <Btn $w={17}><Caret /></Btn>
              <Box $w={52} $ml={3}><Selected><Cells>074610</Cells></Selected></Box>
              <Btn $w={13} $ml={2}><Caret /></Btn>
              <Btn $w={16}><Search /></Btn>
              <Btn $w={18}><Star /></Btn>
              <Btn $w={10}><Tri s={6} /></Btn>
              <Box $w={149} $ml={2}><News><KoSpan>뉴</KoSpan></News><StockName>이엔플러스</StockName></Box>
              <ActiveSeg $w={20} $ml={2} $on><KoSpan>일</KoSpan></ActiveSeg>
              {['주','월','년','분','시','틱'].map(t => <ActiveSeg key={t} $w={20}><KoSpan>{t}</KoSpan></ActiveSeg>)}
              <ActiveSeg $w={19} $ml={1} $on><Cells>1</Cells></ActiveSeg>
              {['2','3','4'].map(t => <ActiveSeg key={t} $w={20}><Cells>{t}</Cells></ActiveSeg>)}
              <Box $w={28}><Cells>1</Cells></Box>
              <Btn $w={14}><Caret /></Btn>
              <Box $w={30} $ml={1} $end><Cells>150</Cells></Box>
              <Spin />
              <Slash><Cells>/</Cells></Slash>
              <Box $w={28}><Cells>600</Cells></Box>
              <Btn $w={18} $ml={2}><NewWin /></Btn>
              <Btn $w={18} $ml={2}><Save /></Btn>
              <Collapse><Tri dir="l" s={6} c="#6a7684" /><Tri s={6} c="#222" /></Collapse>
            </ToolRow>
            <ToolRow>
              <Btn $w={58} $gap={8}><Cells>1 X 1</Cells><Grid3 /></Btn>
              <Btn $w={19} $ml={2} $c="#222"><Cells>1×1</Cells></Btn>
              <Btn $w={45} $ml={3}><Dash>종목</Dash></Btn>
              <Btn $w={45} $ml={2}><Dash>주기</Dash></Btn>
              <Btn $w={46} $ml={3}><Dash>기간</Dash></Btn>
              <Btn $w={45} $ml={2}><Dash>지표</Dash></Btn>
              <Btn $w={19} $ml={5}><Move /></Btn>
              <Btn $w={20} $ml={4}><Won /></Btn>
              <Btn $w={21} $ml={4}><Tri dir="l" s={6} /></Btn>
              <Btn $w={21}><Ico width="7" height="7" viewBox="0 0 7 7"><rect width="7" height="7" fill="#444" /></Ico></Btn>
              <Btn $w={20}><Tri s={6} /></Btn>
              <Btn $w={46} $ml={4} $c="#333"><KoSpan>초기화</KoSpan></Btn>
              <Btn $w={57} $ml={5} $c="#333"><KoSpan>보조기능</KoSpan></Btn>
              <Btn $w={69} $ml={5} $c="#333"><KoSpan>호가주문</KoSpan></Btn>
              <Btn $w={20}><Caret /></Btn>
              <Box $w={69} $ml={5} $c="#444"><Cells>2023/03/16</Cells></Box>
              <Btn $w={20} $ml={1}><Calendar /></Btn>
              <Btn $w={17} $ml={4}><Gear /></Btn>
              <Btn $w={19} $ml={4}><DotGrid /></Btn>
              <Btn $w={19} $ml={4}><Export /></Btn>
            </ToolRow>
            <ChartWrap>
              <Header>
                <Check />
                <HeadName $ml={9}>이엔플러스</HeadName>
                <HeadNum $ml={18} $c="#0b2fa6"><Cells cell={7}>5,550</Cells></HeadNum>
                <HeadNum $ml={11}><Tri dir="d" s={10} c="#0b2fa6" /></HeadNum>
                <HeadNum $ml={7} $c="#0b2fa6"><Cells cell={7}>240</Cells></HeadNum>
                <HeadNum $ml={10} $c="#0b2fa6"><Cells cell={7}>(-4.15%)</Cells></HeadNum>
                <HeadNum $ml={18}><Cells cell={7}>7,488,466</Cells></HeadNum>
                <HeadName $ml={11}>시</HeadName><HeadNum><Cells cell={7}>:</Cells></HeadNum><HeadNum $c="#0b2fa6"><Cells cell={7}>5,680</Cells></HeadNum>
                <HeadName $ml={8} $c="#d0101a">고</HeadName><HeadNum><Cells cell={7}>:</Cells></HeadNum><HeadNum $c="#0b2fa6"><Cells cell={7}>5,770</Cells></HeadNum>
                <HeadName $ml={6} $c="#1f4fd0">저</HeadName><HeadNum><Cells cell={7}>:</Cells></HeadNum><HeadNum $c="#0b2fa6"><Cells cell={7}>5,390</Cells></HeadNum>
                <HeadName $ml={7}>시총</HeadName><HeadNum><Cells cell={7}>:3,237</Cells></HeadNum><HeadName $ml={0}>억</HeadName>
                <Period>
                  <PeriodText><Cells>[1</Cells><KoSpan>일</KoSpan><Cells>]</Cells></PeriodText>
                  <PanelBtn><Ico width="9" height="8" viewBox="0 0 9 8"><rect x=".5" y=".5" width="8" height="7" fill="none" stroke="#222" /><path d="M0 1.500h9" stroke="#222" strokeWidth="2" /></Ico></PanelBtn>
                  <PanelBtn><XMark /></PanelBtn>
                </Period>
              </Header>
              <PriceChart />
              <PanelLine />
              <VolChart />
              <PanelLine />
              <ScrollBar>
                <Btn $w={15} $h={15} $ml={1}><Tri dir="l" c="#5c6f86" /></Btn>
                <Thumb />
                <Ico $ml={3} width="15" height="15" viewBox="0 0 15 15"><path d="M4 2l8 5.500L4 13z" fill="#5c6f86" /></Ico>
                <Ico $ml={5} width="62" height="17" viewBox="0 0 62 17">
                  <rect x=".5" y="3.500" width="60" height="4" fill="#fff" stroke="#9aa8b6" />
                  <rect x="14" y="1" width="5" height="9" fill="#1f6fd0" />
                  <path d="M1 16v-4M5 16v-2M9 16v-4M13 16v-2M17 16v-4M21 16v-2M25 16v-4M29 16v-2M33 16v-4M37 16v-2M41 16v-4M45 16v-2M49 16v-4M53 16v-2M57 16v-4M60 16v-2" stroke="#555" />
                </Ico>
                {['M4 7h6', 'M4 7h6M7 4v6', 'M5 10l2-6 2 6M5.500 8h3'].map((d, i) => (
                  <Ico key={i} $ml={i ? 3 : 6} width="15" height="15" viewBox="0 0 15 15">
                    <circle cx="7" cy="7" r="5.500" fill="#cfd6de" stroke="#556272" strokeWidth="1.500" /><path d={d} stroke="#333" fill="none" /><path d="M11 11l3.500 3.500" stroke="#445" strokeWidth="2" />
                  </Ico>
                ))}
              </ScrollBar>
            </ChartWrap>
          </Main>
          <RightBar>
            <RightRule />
            {DrawIcons.map(([corner, g], i) => (
              <ToolCell key={i} $corner={!!corner}><ToolSvg viewBox="0 0 21 18">{g}</ToolSvg></ToolCell>
            ))}
          </RightBar>
        </Body>
      </Window>
    </Page>
  );
}
